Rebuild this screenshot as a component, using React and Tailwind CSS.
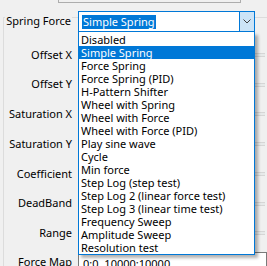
const options = [
  'Disabled',
  'Simple Spring',
  'Force Spring',
  'Force Spring (PID)',
  'H-Pattern Shifter',
  'Wheel with Spring',
  'Wheel with Force',
  'Wheel with Force (PID)',
  'Play sine wave',
  'Cycle',
  'Min force',
  'Step Log (step test)',
  'Step Log 2 (linear force test)',
  'Step Log 3 (linear time test)',
  'Frequency Sweep',
  'Amplitude Sweep',
  'Resolution test',
]

const rows = [
  { label: 'Offset X', h: 'h-[30px]' },
  { label: 'Offset Y', h: 'h-[29px]' },
  { label: 'Saturation X', h: 'h-[30px]' },
  { label: 'Saturation Y', h: 'h-[30px]' },
  { label: 'Coefficient', h: 'h-[30px]' },
  { label: 'DeadBand', h: 'h-[29px]' },
  { label: 'Range', h: 'h-[30px]' },
]

function Channel() {
  return <div className="ml-[6px] mr-[2px] h-[4px] flex-1 border-y border-[#d6d6d6] bg-[#e7eaea]" />
}

export default function App() {
  return (
    <div className="relative h-[266px] w-[267px] overflow-hidden whitespace-nowrap bg-[#f0f0f0] font-['Noto_Sans',sans-serif] text-[11px] text-black">
      <div className="ml-[58px] h-[3px] w-[183px] border-x border-b border-[#adadad]" />

      <div className="ml-[3px] mt-[14px] border-l border-t border-[#dcdcdc]">
        <div className="-mt-[7px] flex h-[21px] items-center">
          <div className="w-[68px] text-right">
            <span className="bg-[#f0f0f0] px-[1px]">Spring Force</span>
          </div>
          <div className="ml-[6px] flex h-[21px] w-[177px] border border-[#0078d7] bg-white">
            <div className="flex flex-1 items-center pl-[3px]">
              <span className="bg-[#0078d7] px-[1px] leading-[14px] text-white">Simple Spring</span>
            </div>
            <div className="flex w-[15px] items-center justify-center border-l border-[#0078d7] bg-[#cce4f7]">
              <svg width="8" height="5" viewBox="0 0 8 5">
                <path d="M0.5 0.5 L4 4 L7.5 0.5" fill="none" stroke="#404040" strokeWidth="1" />
              </svg>
            </div>
          </div>
        </div>

        <div className="h-[8px]" />

        {rows.map((row) => (
          <div key={row.label} className={`flex items-center ${row.h}`}>
            <div className="w-[68px] text-right">{row.label}</div>
            <Channel />
          </div>
        ))}

        <div className="flex h-[30px] items-start">
          <div className="w-[68px] pt-[6px] text-right">Force Map</div>
          <div className="ml-[6px] mt-[4px] h-[22px] flex-1 border border-[#7a7a7a] bg-white pl-[4px] pt-[3px]">0:0, 10000:10000</div>
        </div>
      </div>

      <div className="absolute left-[78px] top-[32px] w-[177px] border-x border-b border-[#0078d7] bg-white pt-[1px] shadow-[3px_3px_3px_rgba(0,0,0,0.3)]">
        {options.map((opt) => (
          <div
            key={opt}
            className={`h-[13px] pl-[2px] leading-[13px] ${opt === 'Simple Spring' ? 'bg-[#0078d7] text-white' : ''}`}
          >
            {opt}
          </div>
        ))}
      </div>
    </div>
  )
}
